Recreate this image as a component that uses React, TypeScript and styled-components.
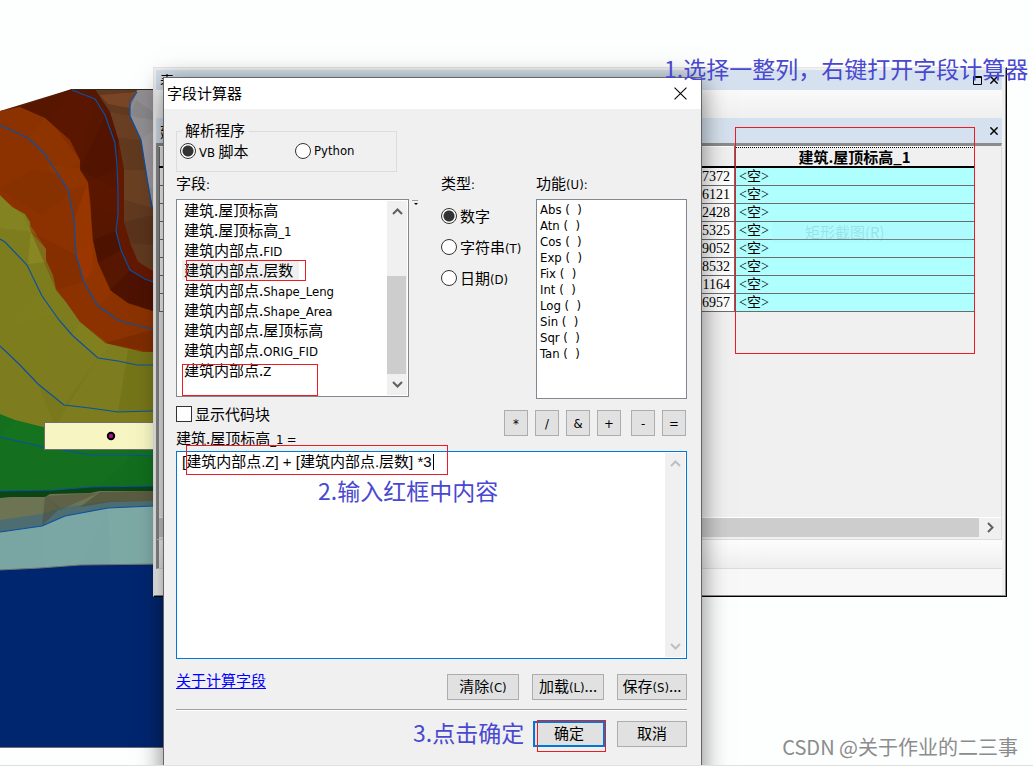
import React from "react";
import styled, { createGlobalStyle, css } from "styled-components";

const cjk = '"Noto Sans CJK SC", sans-serif';

const GlobalStyle = createGlobalStyle`
  * { box-sizing: border-box; }
  body {
    margin: 0;
    background: #fdfefe;
    color: #000;
    font: 15px/20px ${cjk};
  }
  button, textarea { font: inherit; color: inherit; }
`;

const Desktop = styled.main`
  position: relative;
  height: 100vh;
  overflow: hidden;
  border-bottom: 1px solid #dfe1e1;
`;

const MapView = styled.svg`
  position: absolute;
  left: 0;
  top: 88px;
  display: block;
`;

/* ---------- attribute table window ---------- */

const TableWindow = styled.section`
  position: absolute;
  left: 153px;
  top: 67px;
  width: 854px;
  padding: 2px 4px 0 2px;
  background: #f0f0f0;
  border: 1px solid #e6e6e6;
  border-right: 1px solid #000;
  border-bottom: 1px solid #000;
  box-shadow: inset -1px -1px #8a8a8a;
`;

const Strip = styled.header<{ $tall?: boolean }>`
  display: flex;
  justify-content: space-between;
  align-items: center;
  height: ${(p) => (p.$tall ? 25 : 20)}px;
  padding: 0 4px;
  background: #d5e1ee;
  font-size: 14px;
`;

const StripButtons = styled.div`
  display: flex;
  gap: 8px;
`;

const GlyphButton = styled.button`
  display: flex;
  padding: 0;
  border: 0;
  background: none;
`;

const ToolStrip = styled.div`
  height: 28px;
  background: linear-gradient(#fafafa, #efefef);
`;

const GridFrame = styled.div`
  height: 397px;
  display: flex;
  flex-direction: column;
  justify-content: space-between;
  border: 3px solid #8b8b8b;
  border-right: 1px solid #dcdcdc;
  border-bottom: 1px solid #dcdcdc;
`;

const Grid = styled.table`
  width: 816px;
  table-layout: fixed;
  border-collapse: collapse;
  font: 14px/16px "Liberation Serif", ${cjk};
  th, td { padding: 1px 4px 0; height: 18px; border: 1px solid #6b6b6b; }
  th { height: 20px; border-top-color: #fff; border-bottom: 2px solid #000; background: #f0f0f0; }
  td { text-align: right; background: #fff; }
`;

const PickedHead = styled.th`
  outline: 1px dotted #000;
  outline-offset: -1px;
  font: bold 15px/16px ${cjk};
`;

const EmptyCell = styled.td`
  && { text-align: left; background: #afffff; }
`;

const ColumnSizes = styled.col<{ $w?: number }>`
  ${(p) => p.$w && css`width: ${p.$w}px;`}
`;

const HScroll = styled.div`
  display: flex;
  height: 22px;
  padding-bottom: 2px;
  border-top: 1px solid #fff;
`;

const HThumb = styled.div`
  flex: 1;
  background: #cdcdcd;
`;

const HArrow = styled(GlyphButton)`
  width: 22px;
  align-items: center;
  justify-content: center;
`;

const RecordBar = styled.div`
  height: 29px;
  background: linear-gradient(#fdfdfd, #eeeeee);
  border-left: 3px solid #8b8b8b;
  border-bottom: 1px solid #dcdcdc;
`;

const TabBar = styled.div`
  height: 27px;
  background: #f8f8f8;
  border-bottom: 1px solid #8a8a8a;
`;

/* ---------- field calculator dialog ---------- */

const Dialog = styled.section`
  position: absolute;
  left: 163px;
  top: 77px;
  width: 539px;
  padding-bottom: 48px;
  background: #f0f0f0;
  border: 1px solid #666;
  box-shadow: 0 4px 24px rgba(0, 0, 0, 0.5);
`;

const TitleBar = styled.header`
  display: flex;
  justify-content: space-between;
  align-items: center;
  height: 31px;
  padding: 0 14px 0 3px;
  background: #fff;
  h1 { margin: 0; padding-bottom: 1px; font: 15px/20px ${cjk}; }
`;

const Body = styled.form`
  padding: 13px 14px 0 12px;
`;

const TopGrid = styled.div`
  display: grid;
  grid-template-columns: 233px 1fr 151px;
`;

const ParserGroup = styled.fieldset`
  grid-column: 1 / -1;
  display: flex;
  width: 221px;
  height: 50px;
  margin: 0;
  padding: 2px 3px;
  border: 1px solid #dcdcdc;
  legend { height: 18px; padding: 0 4px; margin-left: 1px; line-height: 15px; }
`;

const TypesArea = styled.div`
  padding-left: 32px;
`;

const ColumnLabel = styled.div`
  height: 27px;
  padding-top: 1px;
`;

const Choice = styled.label<{ $w?: number }>`
  display: flex;
  align-items: center;
  gap: 3px;
  height: 18px;
  white-space: nowrap;
  ${(p) => p.$w && css`width: ${p.$w}px;`}
`;

const Radio = styled.input.attrs({ type: "radio" })`
  appearance: none;
  width: 16px;
  height: 16px;
  margin: 0;
  border: 1px solid #333;
  border-radius: 50%;
  background: #fff;
  &:checked { background: radial-gradient(circle, #333 5px, #fff 6px); }
`;

const Check = styled.input.attrs({ type: "checkbox" })`
  appearance: none;
  width: 16px;
  height: 16px;
  margin: 0;
  border: 1px solid #333;
  background: #fff;
`;

const TypeColumn = styled.div`
  display: flex;
  flex-direction: column;
  gap: 13px;
  padding-top: 8px;
`;

const ListFrame = styled.div`
  display: flex;
  height: 198px;
  background: #fff;
  border: 1px solid #828790;
`;

const FieldList = styled.ul`
  flex: 1;
  margin: 0;
  padding: 0 0 0 5px;
  list-style: none;
`;

const FieldItem = styled.li`
  width: max-content;
  height: 20px;
  padding: 0 6px 0 2px;
  white-space: nowrap;
  &[aria-selected="true"] { background: #f0f0f0; }
`;

const FunctionList = styled.ul`
  height: 200px;
  margin: 0;
  padding: 2px 3px;
  list-style: none;
  background: #fff;
  border: 1px solid #828790;
  font: 13px/16px "DejaVu Sans Condensed", "Noto Sans", sans-serif;
  white-space: pre;
`;

const Latin = styled.span`
  font: 13px/16px "DejaVu Sans Condensed", "Noto Sans", sans-serif;
`;

const VScroll = styled.div`
  display: flex;
  flex-direction: column;
  justify-content: space-between;
  width: 20px;
  margin: 1px;
  background: #f0f0f0;
`;

const VArrow = styled(GlyphButton)`
  height: 21px;
  align-items: center;
  justify-content: center;
`;

const VTrack = styled.div`
  flex: 1;
  display: flex;
  align-items: flex-end;
`;

const VThumb = styled.div`
  width: 19px;
  height: 98px;
  background: #cdcdcd;
`;

const MidRow = styled.div`
  display: flex;
  justify-content: space-between;
  padding-right: 1px;
`;

const CodeColumn = styled.div`
  display: flex;
  flex-direction: column;
  gap: 5px;
  padding-top: 6px;
`;

const ExpressionLabel = styled.label`
  height: 17px;
  white-space: pre;
`;

const Operators = styled.div`
  display: flex;
  gap: 10px;
  padding-top: 11px;
`;

const OperatorGroup = styled.div`
  display: flex;
  gap: 7px;
`;

const PushButton = styled.button<{ $w: number; $main?: boolean }>`
  width: ${(p) => p.$w}px;
  height: 26px;
  padding: 0 0 2px;
  background: #e1e1e1;
  border: ${(p) => (p.$main ? "2px solid #0078d7" : "1px solid #adadad")};
  white-space: nowrap;
  line-height: 20px;
`;

const ExpressionBox = styled.div`
  position: relative;
  display: flex;
  height: 208px;
  margin-top: 6px;
  background: #fff;
  border: 1px solid #0078d7;
`;

const Expression = styled.textarea`
  flex: 1;
  padding: 0 5px;
  border: 0;
  outline: 0;
  resize: none;
  background: none;
  font: 15px/20px "Liberation Sans", ${cjk};
`;

const Caret = styled.span`
  position: absolute;
  left: 256px;
  top: 2px;
  width: 1px;
  height: 16px;
  background: #000;
`;

const ActionRow = styled.div<{ $end?: boolean }>`
  display: flex;
  align-items: flex-start;
  padding-top: ${(p) => (p.$end ? 10 : 15)}px;
  gap: ${(p) => (p.$end ? 12 : 13)}px;
  ${(p) => p.$end && css`justify-content: flex-end;`}
`;

const HelpLink = styled.a`
  margin-right: auto;
  line-height: 12px;
  color: #00f;
  text-underline-offset: 2px;
`;

const Rule = styled.hr`
  height: 2px;
  margin: 9px 0 0;
  border: 0;
  border-top: 1px solid #a0a0a0;
  background: #fff;
`;

const Corner = styled.span`
  position: absolute;
  left: 248px;
  top: 122px;
  width: 6px;
  height: 5px;
  border-top: 1px solid #999;
  &::after {
    content: "";
    position: absolute;
    left: 2px;
    top: 2px;
    border: 2px solid transparent;
    border-top-color: #000;
  }
`;

/* ---------- annotations ---------- */

const Note = styled.p<{ $x: number; $y: number }>`
  position: absolute;
  left: ${(p) => p.$x}px;
  top: ${(p) => p.$y}px;
  margin: 0;
  font: 23px/28px ${cjk};
  color: #4848d0;
  white-space: nowrap;
`;

const RedFrame = styled.div<{ $x: number; $y: number; $w: number; $h: number }>`
  position: absolute;
  left: ${(p) => p.$x}px;
  top: ${(p) => p.$y}px;
  width: ${(p) => p.$w}px;
  height: ${(p) => p.$h}px;
  border: 1px solid #ed1c24;
  pointer-events: none;
`;

const GhostTip = styled.span`
  position: absolute;
  left: 772px;
  top: 222px;
  width: 200px;
  height: 21px;
  padding-left: 33px;
  font-size: 15px;
  color: rgba(60, 140, 150, 0.22);
  background: rgba(170, 235, 250, 0.2);
`;

const Watermark = styled.p`
  position: absolute;
  right: 15px;
  bottom: 4px;
  margin: 0;
  font: 20px/28px ${cjk};
  color: #8c8c8c;
`;

const Chevron = ({ d, color = "#606060" }: { d: "up" | "down" | "right"; color?: string }) => (
  <svg width="11" height="11" viewBox="0 0 11 11" fill="none" stroke={color} strokeWidth="2" aria-hidden="true">
    <path d={{ up: "M1 8 5.500 3.500 10 8", down: "M1 3 5.500 7.500 10 3", right: "M3 1 7.500 5.500 3 10" }[d]} />
  </svg>
);

const Cross = ({ size, thin }: { size: number; thin?: boolean }) => (
  <svg width={size} height={size} viewBox="0 0 12 12" stroke="#000" strokeWidth={thin ? 1 : 2.2} aria-hidden="true">
    <path d="M0.500 0.500 11.500 11.500M11.500 0.500 0.500 11.500" />
  </svg>
);

/* Sets ASCII runs in the smaller dialog face, Chinese in the regular one. */
const Mixed = ({ text }: { text: string }) => (
  <>
    {text.split(/([A-Za-z0-9_()=:]+)/).map((part, i) => (i % 2 ? <Latin key={i}>{part}</Latin> : part))}
  </>
);

const fields = [
  "建筑.屋顶标高",
  "建筑.屋顶标高_1",
  "建筑内部点.FID",
  "建筑内部点.层数",
  "建筑内部点.Shape_Leng",
  "建筑内部点.Shape_Area",
  "建筑内部点.屋顶标高",
  "建筑内部点.ORIG_FID",
  "建筑内部点.Z",
];
const functions = ["Abs", "Atn", "Cos", "Exp", "Fix", "Int", "Log", "Sin", "Sqr", "Tan"];
const values = ["7372", "6121", "2428", "5325", "9052", "8532", "1164", "6957"];

const contours = [
  "72,90 95,99 105,115 115,143 117,165 118,190 118,215 116,231 121,250 130,270 145,279 153,282",
  "0,125 28,138 43,152 58,174 68,190 74,220 76,255 84,282 98,306 118,320 135,325 153,329",
  "0,239 5,242 27,265 42,296 59,320 72,335 98,358 118,361 137,365 153,365",
  "0,346 20,365 38,384 64,405 90,408 118,412 153,411",
  "0,437 44,447 63,450 90,455 133,455 153,456",
  "0,491 55,490 90,487 153,486",
  "0,532 42,526 65,516 108,508 153,506",
  "137,92 130,102 130,116 141,140 148,184 152,208",
];

const facets: [string, string][] = [
  ["0,230 46,260 66,310 0,330", "#8f8f2418"],
  ["31,226 46,249 46,262 28,264", "#a0a03050"],
  ["0,196 24,216 31,232 0,228", "#96963040"],
  ["80,322 110,345 98,358 72,335", "#8f8c2440"],
  ["153,352 128,350 118,412 153,411", "#5d5a0c40"],
  ["55,427 98,358 64,405 38,384", "#6a681430"],
  ["0,340 42,296 60,321 38,384", "#8c882418"],
  ["74,220 76,255 84,282 93,270 91,205 88,182", "#a83c0070"],
  ["68,190 88,184 80,168 45,165", "#9c3a0050"],
  ["58,174 80,162 70,140 45,118 28,138", "#98400030"],
  ["0,190 42,215 68,195 58,174 30,170", "#7a280030"],
  ["76,255 84,282 98,306 112,292 98,263 93,240", "#a0380060"],
  ["31,232 76,255 84,282 56,290", "#7a280048"],
  ["105,343 153,330 153,352", "#6a240070"],
  ["72,90 95,99 80,160 50,120", "#68180038"],
  ["105,115 118,140 118,190 80,170", "#4a100050"],
  ["88,182 118,168 118,215 91,205", "#68180048"],
  ["93,240 116,231 121,250 98,263", "#3c0c0050"],
  ["110,290 130,270 153,282 153,311 128,303", "#3c0c0060"],
  ["118,140 124,170 124,222 130,243 138,262 153,271 153,282 130,270 116,231 118,190", "#7a1c0058"],
  ["100,95 137,92 130,108 108,104", "#8a502c90"],
  ["110,112 130,116 141,140 118,138", "#7c4a2850"],
  ["124,170 146,170 153,208 124,200", "#7e502c50"],
  ["124,222 153,215 153,245 130,243", "#4c2a1860"],
  ["141,140 148,184 153,190 153,130", "#b0a8b040"],
  ["130,116 136,100 153,112 153,120", "#70707040"],
  ["0,437 15,420 44,428 44,447", "#18802830"],
  ["98,487 133,455 153,456 153,487", "#0c602030"],
  ["45,496 60,508 42,526", "#4c4c3880"],
  ["45,496 98,493 60,510", "#55553c90"],
  ["100,492 153,491 153,501 110,502 80,507", "#4a4a3290"],
  ["42,526 65,516 108,508 80,565 45,568", "#7ca8a850"],
  ["108,508 153,506 153,564 110,565", "#86b0aa60"],
];

const Terrain = () => (
  <MapView width="164" height="661" viewBox="0 88 164 661" role="img" aria-label="地形图">
    <path fill="#572006" d="M0 111 72 89H153V330H0Z" />
    <path fill="#571600" d="M20 107 72 89H105L153 270V315H60Z" />
    <path fill="#60391f" d="M95 89H153V271L138 262 130 243 124 222 124 170 118 138 110 112 100 97Z" />
    <path fill="#918e92" d="M138 89H153V208L148 184 141 140 130 116 130 102Z" />
    <path fill="#8b3200" d="M0 111 20 107 45 118 70 140 80 160 80 170 88 182 90 205 93 240 98 263 110 290 128 303 153 311V356H0Z" />
    <path fill="#7d7c1e" d="M0 195 12 207 25 214 30 222 31 232 46 249 46 260 53 275 56 290 66 302 80 322 105 343 143 352 153 352V440H0Z" />
    <path fill="#14701e" d="M0 414 15 420 43 427H153V500H0Z" />
    <path fill="#0b4513" d="M0 491 55 490 90 487 153 486V500H0Z" />
    <path fill="#6d7454" d="M0 498 10 497H45L50 494 90 493 100 491H153V515L0 530Z" />
    <path fill="#4d6d70" d="M0 520 42 514 60 508 110 501H153V520L0 540Z" />
    <path fill="#79a6a2" d="M0 532 42 526 65 516 108 508 153 506V570H0Z" />
    {facets.map(([points, fill], i) => (
      <polygon key={i} points={points} fill={fill} />
    ))}
    <path fill="#002670" stroke="#6f6f6f" d="M-1 570 40 568 80 565 164 564V747.500H-1Z" />
    <path fill="none" stroke="#2c2a1c" d="M72 89.500H153" />
    <g fill="none" stroke="#0a50a4" strokeWidth="1.200">
      {contours.map((points) => (
        <polyline key={points} points={points} />
      ))}
    </g>
    <rect x="44.500" y="422.500" width="120" height="27" fill="#f7f6c3" stroke="#6f6f6f" />
    <circle cx="111" cy="436" r="3.200" fill="#a8108c" stroke="#000" strokeWidth="2" />
  </MapView>
);

export default function App() {
  return (
    <Desktop>
      <GlobalStyle />
      <Terrain />

      <TableWindow aria-label="表">
        <Strip>
          <span>表</span>
          <StripButtons>
            <GlyphButton aria-label="最大化">
              <svg width="9" height="9" fill="none" stroke="#000" aria-hidden="true">
                <path d="M0.500 0.500H8.500V8.500H0.500ZM0 1.500H9" />
              </svg>
            </GlyphButton>
            <GlyphButton aria-label="关闭"><Cross size={8} /></GlyphButton>
          </StripButtons>
        </Strip>
        <ToolStrip />
        <Strip $tall>
          <span>建筑</span>
          <GlyphButton aria-label="关闭表"><Cross size={8} /></GlyphButton>
        </Strip>
        <GridFrame>
          <Grid>
            <colgroup>
              <ColumnSizes />
              <ColumnSizes $w={240} />
            </colgroup>
            <thead>
              <tr><th /><PickedHead>建筑.屋顶标高_1</PickedHead></tr>
            </thead>
            <tbody>
              {values.map((v) => (
                <tr key={v}><td>{v}</td><EmptyCell>&lt;空&gt;</EmptyCell></tr>
              ))}
            </tbody>
          </Grid>
          <HScroll>
            <HThumb />
            <HArrow aria-label="向右滚动"><Chevron d="right" /></HArrow>
          </HScroll>
        </GridFrame>
        <RecordBar />
        <TabBar />
      </TableWindow>
      <GhostTip>矩形截图(R)</GhostTip>

      <Dialog role="dialog" aria-labelledby="calc-title">
        <TitleBar>
          <h1 id="calc-title">字段计算器</h1>
          <GlyphButton aria-label="关闭"><Cross size={13} thin /></GlyphButton>
        </TitleBar>
        <Body onSubmit={(e) => e.preventDefault()}>
          <TopGrid>
            <ParserGroup>
              <legend>解析程序</legend>
              <Choice $w={115}><Radio name="parser" defaultChecked /><span><Mixed text="VB 脚本" /></span></Choice>
              <Choice><Radio name="parser" /><Latin>Python</Latin></Choice>
            </ParserGroup>
            <div>
              <ColumnLabel id="fields"><Mixed text="字段:" /></ColumnLabel>
              <ListFrame>
                <FieldList role="listbox" aria-labelledby="fields">
                  {fields.map((f, i) => (
                    <FieldItem key={f} role="option" aria-selected={i === 3}><Mixed text={f} /></FieldItem>
                  ))}
                </FieldList>
                <VScroll>
                  <VArrow type="button" aria-label="向上滚动"><Chevron d="up" /></VArrow>
                  <VTrack><VThumb /></VTrack>
                  <VArrow type="button" aria-label="向下滚动"><Chevron d="down" /></VArrow>
                </VScroll>
              </ListFrame>
            </div>
            <TypesArea>
              <ColumnLabel id="types"><Mixed text="类型:" /></ColumnLabel>
              <TypeColumn role="radiogroup" aria-labelledby="types">
                <Choice><Radio name="type" defaultChecked /><span>数字</span></Choice>
                <Choice><Radio name="type" /><span><Mixed text="字符串(T)" /></span></Choice>
                <Choice><Radio name="type" /><span><Mixed text="日期(D)" /></span></Choice>
              </TypeColumn>
            </TypesArea>
            <div>
              <ColumnLabel id="functions"><Mixed text="功能(U):" /></ColumnLabel>
              <FunctionList role="listbox" aria-labelledby="functions">
                {functions.map((f) => (
                  <li key={f} role="option" aria-selected={false}>{f + " (  )"}</li>
                ))}
              </FunctionList>
            </div>
          </TopGrid>
          <Corner />

          <MidRow>
            <CodeColumn>
              <Choice><Check /><span>显示代码块</span></Choice>
              <ExpressionLabel htmlFor="expression"><Mixed text="建筑.屋顶标高_1 =" /></ExpressionLabel>
            </CodeColumn>
            <Operators>
              <OperatorGroup>
                {["*", "/", "&", "+"].map((op) => (
                  <PushButton key={op} type="button" $w={24}><Latin>{op}</Latin></PushButton>
                ))}
              </OperatorGroup>
              <OperatorGroup>
                {["-", "="].map((op) => (
                  <PushButton key={op} type="button" $w={24}><Latin>{op}</Latin></PushButton>
                ))}
              </OperatorGroup>
            </Operators>
          </MidRow>

          <ExpressionBox>
            <Expression id="expression" spellCheck={false} defaultValue="[建筑内部点.Z] + [建筑内部点.层数] *3" />
            <Caret />
            <VScroll>
              <VArrow type="button" aria-label="向上滚动"><Chevron d="up" color="#bfbfbf" /></VArrow>
              <VArrow type="button" aria-label="向下滚动"><Chevron d="down" color="#bfbfbf" /></VArrow>
            </VScroll>
          </ExpressionBox>

          <ActionRow>
            <HelpLink href="#help">关于计算字段</HelpLink>
            <PushButton type="button" $w={72}><Mixed text="清除(C)" /></PushButton>
            <PushButton type="button" $w={72}><Mixed text="加载(L)..." /></PushButton>
            <PushButton type="button" $w={70}><Mixed text="保存(S)..." /></PushButton>
          </ActionRow>
          <Rule />
          <ActionRow $end>
            <PushButton type="submit" $w={72} $main>确定</PushButton>
            <PushButton type="button" $w={70}>取消</PushButton>
          </ActionRow>
        </Body>
      </Dialog>

      <RedFrame $x={735} $y={127} $w={240} $h={227} />
      <RedFrame $x={186} $y={260} $w={120} $h={21} />
      <RedFrame $x={182} $y={364} $w={136} $h={32} />
      <RedFrame $x={186} $y={445} $w={262} $h={30} />
      <RedFrame $x={537} $y={720} $w={69} $h={32} />
      <Note $x={664} $y={54}>1.选择一整列，右键打开字段计算器</Note>
      <Note $x={318} $y={476}>2.输入红框中内容</Note>
      <Note $x={413} $y={718}>3.点击确定</Note>
      <Watermark>CSDN @关于作业的二三事</Watermark>
    </Desktop>
  );
}
